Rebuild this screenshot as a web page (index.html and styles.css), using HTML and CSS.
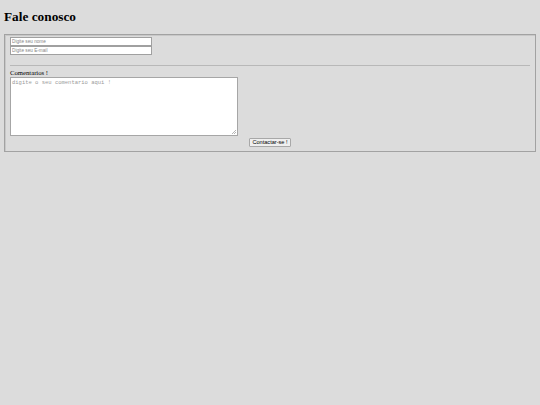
FILE: index.html
```html
<!DOCTYPE html>
<html lang="pt">
<head>
<meta charset="utf-8">
<title>Fale conosco</title>
<link rel="stylesheet" href="styles.css">
</head>
<body>
<h1 class="title">Fale conosco</h1>
<form class="contact">
  <fieldset class="box">
    <input class="field" type="text" placeholder="Digite seu nome">
    <input class="field" type="email" placeholder="Digite seu E-mail">
    <hr class="rule">
    <label class="label" for="msg">Comentarios !</label>
    <textarea class="comment" id="msg" placeholder="digite o seu comentario aqui !"></textarea>
    <div class="actions"><button class="send" type="button">Contactar-se !</button></div>
  </fieldset>
</form>
</body>
</html>
```
FILE: styles.css
```css
html, body {
  margin: 0;
  padding: 0;
  background: #dcdcdc;
}
body {
  padding: 0 4px;
  font-family: "Liberation Serif", serif;
}
.title {
  font-family: "Liberation Serif", serif;
  font-weight: bold;
  font-size: 13.3px;
  line-height: 15px;
  margin: 9px 0 10px;
  color: #000;
}
.contact {
  margin: 0;
}
.box {
  margin: 0;
  width: 532px;
  box-sizing: border-box;
  border: 1px solid #a2a2a2;
  box-shadow: inset 1px 1px 0 #c8c8c8;
  padding: 2px 5px 4px;
  min-width: 0;
}
.field {
  display: block;
  box-sizing: border-box;
  width: 142px;
  height: 9px;
  margin: 0;
  padding: 0 1px;
  border: 1px solid #a0a0a0;
  background: #fff;
  font-family: "Liberation Sans", sans-serif;
  font-size: 4.7px;
  outline: none;
}
.field::placeholder {
  color: #858585;
}
.rule {
  border: 0;
  border-top: 1px solid #b8b8b8;
  height: 0;
  margin: 10px 0 3px;
}
.label {
  display: block;
  font-size: 6.7px;
  line-height: 8px;
  color: #000;
}
.comment {
  display: block;
  box-sizing: border-box;
  width: 228px;
  height: 59px;
  margin: 0;
  padding: 1px;
  border: 1px solid #a6a6a6;
  background-color: #fff;
  background-image:
    linear-gradient(135deg, transparent 45%, #b5b5b5 45%, #b5b5b5 55%, transparent 55%),
    linear-gradient(135deg, transparent 45%, #b5b5b5 45%, #b5b5b5 55%, transparent 55%);
  background-size: 4px 4px, 2px 2px;
  background-position: right 1px bottom 1px, right 1px bottom 1px;
  background-repeat: no-repeat;
  font-family: "Liberation Mono", monospace;
  font-size: 5.5px;
  resize: none;
  outline: none;
}
.comment::placeholder {
  color: #9a9a9a;
}
.actions {
  text-align: center;
  margin-top: 2px;
  line-height: 0;
}
.send {
  box-sizing: border-box;
  height: 9px;
  padding: 0 2px;
  margin: 0;
  font-family: "Liberation Sans", sans-serif;
  font-size: 5.6px;
  line-height: 7px;
  color: #000;
  background: #efefef;
  border: 1px solid #a8a8a8;
  border-radius: 1px;
}
```
